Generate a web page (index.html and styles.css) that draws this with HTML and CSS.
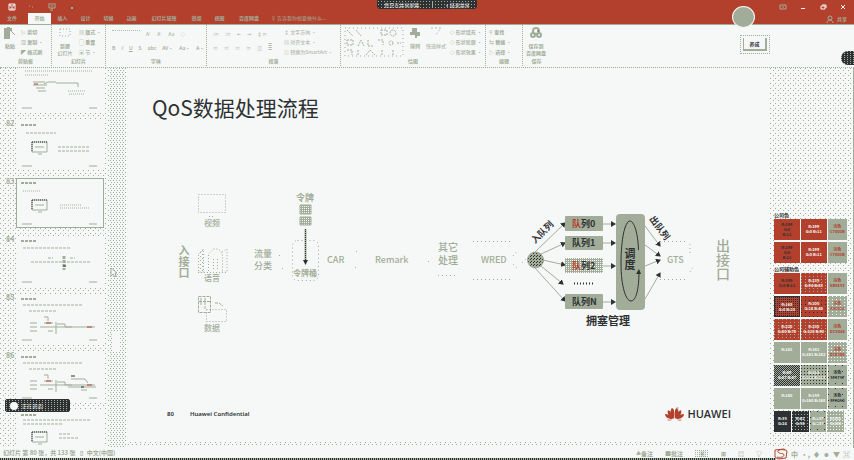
FILE: index.html
```
<!DOCTYPE html>
<html>
<head>
<meta charset="utf-8">
<title>QoS数据处理流程</title>
<link rel="stylesheet" href="styles.css">
</head>
<body>
<header class="titlebar">
  <div class="quick">
    <button aria-label="保存"><svg class="ico" viewBox="0 0 8 8"><path d="M1 1h6v6H1zM2 1v2h4V1M3 7V5h2v2" fill="none" stroke="#f6f8f7"/></svg></button>
    <button aria-label="撤消"><svg class="ico" viewBox="0 0 8 8"><path d="M1 3h1M4 4h1" stroke="#a2ad99"/></svg></button>
    <button aria-label="放映"><svg class="ico" viewBox="0 0 8 8"><path d="M0 1h8M1 2v3h6V2M4 5v3M3 3h2M2 7h1" fill="none" stroke="#a2ad99"/></svg></button>
    <button aria-label="自定义"><svg class="ico" viewBox="0 0 8 8"><path d="M3 4h2v2H3z" fill="#a2ad99"/></svg></button>
  </div>
  <div class="sharing"><span>您正在共享屏幕</span><i></i><button>◖ 结束共享</button></div>
  <div class="window">
    <button aria-label="功能区"><svg class="ico" viewBox="0 0 8 8"><path d="M1 2h6v4H1zM3 4h2" fill="none" stroke="#a2ad99"/></svg></button>
    <button aria-label="最小化"><svg class="ico" viewBox="0 0 8 8"><path d="M2 5.500h4" stroke="#f6f8f7"/></svg></button>
    <button aria-label="还原"><svg class="ico" viewBox="0 0 8 8"><path d="M2 3h4v3H2zM3 2h4v3" fill="none" stroke="#f6f8f7"/></svg></button>
    <button aria-label="关闭"><svg class="ico" viewBox="0 0 8 8"><path d="M2 2l4 4M6 2L2 6" stroke="#f6f8f7"/></svg></button>
  </div>
</header>
<nav class="tabs">
  <a href="#">文件</a><a href="#" class="on">开始</a><a href="#">插入</a><a href="#">设计</a><a href="#">切换</a><a href="#">动画</a><a href="#" class="wide">幻灯片放映</a><a href="#">审阅</a><a href="#">视图</a><a href="#" class="disk">百度网盘</a><a href="#" class="ask">♀ 告诉我你想要做什么...</a>
  <button class="share"><svg class="ico" viewBox="0 0 8 8"><circle cx="4" cy="3" r="2" fill="none" stroke="#a2ad99"/><path d="M1 8c0-4 6-4 6 0" fill="none" stroke="#a2ad99"/></svg>共享</button>
</nav>
<section class="ribbon">
  <div class="group g1">
    <div class="tools">
      <button class="big"><svg class="mid" viewBox="0 0 12 12"><path d="M0 1h3V0h3v1h2v3H6v8H0z" fill="#a2ad99"/><path d="M7 4l4 4" stroke="#a2ad99"/></svg><b>粘贴</b></button>
      <div class="rows"><button>✂ <b>剪切</b></button><button>▧ <b>复制</b> ·</button><button>◤ <b>格式刷</b></button></div>
    </div><h6>剪贴板</h6>
  </div>
  <div class="group g2">
    <div class="tools">
      <button class="big"><svg class="mid" viewBox="0 0 12 12"><path d="M1 2h10v7H1z" fill="none" stroke="#a2ad99" stroke-dasharray="1 2"/></svg><b>新建</b><br>幻灯片</button>
      <div class="rows"><button>▤ <b>版式</b> ·</button><button>▢ <b>重置</b></button><button>▣ 节 ·</button></div>
    </div><h6>幻灯片</h6>
  </div>
  <div class="group g3">
    <div class="tools stack">
      <div class="line faint"><span class="field"></span><span>A⁺</span><span>A⁻</span><span>Aa</span><span>◇</span></div>
      <div class="line"><span>B</span><span><em>I</em></span><span><u>U</u></span><span>S</span><span>abc</span><span>AV·</span><span>Aa·</span><span>A·</span></div>
    </div><h6>字体</h6>
  </div>
  <div class="group g4">
    <div class="tools">
      <div class="stack">
        <div class="line faint"><span>⁝≡</span><span>⁝≡</span><span>⇤</span><span>⇥</span><span>‡≡</span></div>
        <div class="line faint"><span>≡</span><span>≡</span><span>≡</span><span>≡</span><span>▥</span><span>≣</span></div>
      </div>
      <div class="rows faint"><button>↕ 文字方向 ·</button><button>▤ 对齐文本 ·</button><button>◫ 转换为SmartArt ·</button></div>
    </div><h6>段落</h6>
  </div>
  <div class="group g5">
    <div class="tools">
      <svg class="shapes" viewBox="0 0 60 30" fill="none" stroke="#a2ad99" stroke-dasharray="2 1"><path d="M1 1h58v28H1z" stroke-dasharray="1 3"/><path d="M3 3l6 6M12 3l5 6M37 3h6v5h-6zM3 13h6v5H3zM14 19l3-6 3 6M24 13v6h5M34 13h5v5M53 16h4M3 23h5v5M14 23v5M22 28l4-5 5 5M38 23v5M49 23v5"/><circle cx="49" cy="6" r="3"/><circle cx="47" cy="16" r="2"/></svg>
      <button class="big"><svg class="mid" viewBox="0 0 12 12"><path d="M3 1h5v4h3v4H8v2H6V8H1V5h2z" fill="#a2ad99"/></svg><b>排列</b></button>
      <button class="big faint"><svg class="mid" viewBox="0 0 12 12"><path d="M1 1h10L5 9" fill="none" stroke="#a2ad99" stroke-dasharray="2 2"/></svg>快速样式</button>
      <div class="rows"><button>◇ 形状填充 ·</button><button>◇ 形状轮廓 ·</button><button>◇ 形状效果 ·</button></div>
    </div><h6>绘图</h6>
  </div>
  <div class="group g6">
    <div class="tools"><div class="rows"><button>⚲ <b>查找</b></button><button>⇆ <b>替换</b> ·</button><button>▷ <b>选择</b> ·</button></div></div><h6>编辑</h6>
  </div>
  <div class="group g7">
    <div class="tools"><button class="big"><svg class="mid" viewBox="0 0 12 12"><circle cx="6" cy="4" r="3" fill="none" stroke="#a2ad99" stroke-width="2"/><circle cx="3" cy="8" r="2" fill="none" stroke="#a2ad99" stroke-width="2"/><circle cx="9" cy="8" r="2" fill="none" stroke="#a2ad99" stroke-width="2"/><path d="M7 4h2" stroke="#b3402d"/></svg><b>保存到</b><br><b>百度网盘</b></button></div><h6>保存</h6>
  </div>
</section>
<main class="work">
  <aside class="thumbs">
    <ol>
      <li><span></span><svg viewBox="0 0 88 50"><use href="#frame"/><path d="M17 20h12M17 23h14M20 26h9M22 29h8M28 22l4-2h8M40 21h22v4" class="k"/><path d="M18 22h4" stroke="#b3402d"/><path d="M9 9h67M9 13h24M52 29h17M53 32h15" class="d"/></svg></li>
      <li><span>82</span><svg viewBox="0 0 88 50"><use href="#frame"/><use href="#screen"/><path d="M10 13h30M42 27h31M42 31h31" class="k2"/></svg></li>
      <li class="sel"><span>83</span><svg viewBox="0 0 88 50"><use href="#frame"/><use href="#screen"/><path d="M7 13h17M44 27h22M44 30h30" class="d"/></svg></li>
      <li><span>84</span><svg viewBox="0 0 88 50"><use href="#frame"/><path d="M7 12h48M15 26h60M32 22h5M54 22h5" class="k2"/><path d="M48 20v14" class="k" stroke-width="3" stroke-dasharray="3 1"/><path d="M47 30h3" stroke="#2e3133"/></svg></li>
      <li><span>85</span><svg viewBox="0 0 88 50"><use href="#frame"/><use href="#flow"/></svg></li>
      <li><span>86</span><svg viewBox="0 0 88 50"><use href="#frame"/><use href="#flow"/><path d="M55 27h14l3 4M52 35h28M65 38h6" class="k"/><path d="M55 24h4M65 35h3" stroke="#2e3133"/></svg></li>
      <li><span></span><svg viewBox="0 0 88 50"><use href="#frame"/><use href="#screen"/><path d="M7 10h68M7 14h40M43 24h12M43 28h20" class="k2"/></svg></li>
    </ol>
    <div class="speaking"><i></i>正在讲话:</div>
  </aside>
  <div class="scroll"><i></i></div>
  <article class="slide">
    <h1>QoS数据处理流程</h1>
    <svg class="diagram" viewBox="128 185 642 150">
      <defs>
        <marker id="arrow" viewBox="0 0 5 6" refX="4" refY="3" markerWidth="5" markerHeight="6" markerUnits="userSpaceOnUse" orient="auto"><path d="M0 0l5 3-5 3z" fill="#2e3133"/></marker>
        <pattern id="speck" width="3" height="3" patternUnits="userSpaceOnUse"><path d="M0 0h3v3H0z" fill="#a2ad99"/><path d="M0 0h1v1H0zM2 1h1v1H2z" fill="#2e3133"/></pattern>
        <pattern id="mesh" width="2" height="2" patternUnits="userSpaceOnUse"><path d="M0 0h2v2H0z" fill="#a2ad99"/><path d="M0 0h1v1H0z" fill="#f6f8f7"/></pattern>
        <pattern id="light" width="4" height="4" patternUnits="userSpaceOnUse"><path d="M0 0h1v1H0zM2 2h1v1H2z" fill="#a2ad99"/></pattern>
      </defs>
      <g class="dots">
        <path d="M198.500 194.500h27v18h-27zM209 216.500h6"/>
        <path d="M198.500 254l5-5v23h-5zM208.500 271v-17l5-5h5l4 5v17M213.500 259v12M217.500 259v12M222 252l5-3v23h-6M198 272.500h28"/>
        <path d="M206.500 309.500h20v12h-20z"/>
        <rect x="292.500" y="240.500" width="26" height="40" rx="5" stroke-dasharray="1 3"/>
        <path d="M473 241.500h40M473 279.500h40M438 275.500h20" stroke-dasharray="1 3"/>
        <path d="M513 256l5-6M513 264l5 5M522 263l4-4M660 241.500h28M660 279.500h28M690 244v12M690 272l3-5" stroke-dasharray="1 3"/>
        <path d="M356 251.500h1M355 267.500h2M428 261.500h1M279 255.500h1M282 268.500h1"/>
      </g>
      <path d="M199 249h4v23h-4z" fill="url(#light)"/>
      <path d="M198.500 296.500h12v16h-12zM199 301.500h12M201 298v8M205 298v12M215 303h4l4 3" fill="none" stroke="#a2ad99" stroke-dasharray="3 1"/>
      <path d="M300 205h11v9h-11zM300 217h11v8h-11z" fill="url(#mesh)" stroke="#a2ad99"/>
      <path d="M305.500 229v32" stroke="#a2ad99" stroke-width="2"/><path d="M305.500 229v32" stroke="#2e3133" stroke-dasharray="1 1"/><path d="M303 260h5l-2.500 5z" fill="#2e3133"/>
      <g class="sage" font-weight="500">
        <g font-size="8"><text x="204" y="226">视频</text><text x="204" y="281">语音</text><text x="204" y="331">数据</text></g>
        <text class="down" x="184" y="245" font-size="11" font-weight="700">入接口</text>
        <text x="296" y="201" font-size="9" font-weight="700">令牌</text>
        <g font-size="9"><text x="254" y="257">流量</text><text x="254" y="269">分类</text><text x="327" y="263">CAR</text><text x="375" y="263">Remark</text><text x="481" y="263">WRED</text><text x="667" y="263">GTS</text></g>
        <text x="293" y="276" font-size="8" font-weight="700">令牌桶</text>
        <g font-size="10"><text x="438" y="251">其它</text><text x="438" y="264">处理</text></g>
        <text class="down" x="723" y="239" font-size="14">出接口</text>
      </g>
      <g stroke="#a2ad99">
        <path d="M535 252L565 223" marker-end="url(#arrow)"/><path d="M541 254L565 243" marker-end="url(#arrow)"/><path d="M543 260L565 265" marker-end="url(#arrow)"/><path d="M541 266L563 284" marker-end="url(#arrow)"/><path d="M535 268L565 301" marker-end="url(#arrow)"/>
        <path d="M603 224h12" marker-end="url(#arrow)"/><path d="M603 243h12" marker-end="url(#arrow)"/><path d="M603 266h12" marker-end="url(#arrow)"/><path d="M603 302h12" marker-end="url(#arrow)"/>
        <path d="M645 226L660 246" marker-end="url(#arrow)"/><path d="M645 245L660 256" marker-end="url(#arrow)"/><path d="M645 266L660 260" marker-end="url(#arrow)"/><path d="M645 299L660 273" marker-end="url(#arrow)"/>
      </g>
      <circle cx="535.500" cy="260" r="8" fill="url(#speck)" stroke="#a2ad99"/>
      <g fill="#a2ad99"><rect x="565" y="216" width="38" height="15" rx="1"/><rect x="565" y="236" width="38" height="14" rx="1"/><rect x="565" y="294" width="38" height="15" rx="1"/><rect x="616" y="214" width="29" height="96" rx="4"/></g>
      <rect x="565" y="258" width="38" height="15" rx="1" fill="url(#mesh)"/>
      <g font-size="9" font-weight="700" fill="#2e3133">
        <text x="572" y="227"><tspan fill="#b3402d">队</tspan>列0</text><text x="572" y="246">队列1</text><text x="572" y="269"><tspan fill="#b3402d">队</tspan>列2</text><text x="572" y="305">队列N</text>
        <text class="down" x="630" y="248" font-size="11">调度</text>
        <text x="586" y="325" font-size="11">拥塞管理</text>
        <text transform="translate(535 244) rotate(-45)">入队列</text>
        <text transform="translate(649 219) rotate(53)">出队列</text>
      </g>
      <path d="M574 283.500h21" stroke="#2e3133" stroke-width="2" stroke-dasharray="1 2"/>
      <path d="M638.500 250C638 233 634 221 630 221c-5 0-9 18-9 42s5 38 10 38 8-12 8-29" fill="none" stroke="#2e3133"/><path d="M636 274l3-5 2 5z" fill="#2e3133"/>
    </svg>
    <footer><span class="page">80</span><span>Huawei Confidential</span>
      <div class="brand"><svg viewBox="0 0 20 14"><g fill="#b3402d"><path d="M9.500 12C6 8 5 4 7 1c3-1 3 5 2.500 11zM10.500 12C14 8 15 4 13 1c-3-1-3 5-2.500 11zM9 12C5 11 2 7 3 3c3 0 5 5 6 9zM11 12c4-1 7-5 6-9-3 0-5 5-6 9zM8 12C4 13 0 10 0 7c3 0 6 2 8 5zM12 12c4 1 8-2 8-5-3 0-6 2-8 5zM8 13c-2 1-5 1-6 0zM12 13c2 1 5 1 6 0z"/></g><path d="M12 0h2v4" fill="#a2ad99"/></svg>HUAWEI</div>
    </footer>
  </article>
  <aside class="palette">
    <h2>公司色</h2>
    <div class="swatches">
      <p class="red ink">R:199<br>G:0<br>B:11</p><p class="red">R:199<br>G:0 B:11</p><p class="rust">淡色<br>C7000B</p>
      <p class="red ink">R:199<br>G:0<br>B:11</p><p class="red">R:199<br>G:0 B:11</p><p class="rust">淡色<br>C7000B</p>
    </div>
    <h2>公司辅助色</h2>
    <div class="swatches">
      <p class="red ink two">R:199<br>G:0 B:11</p><p class="red fleck">R:235<br>G:94 B:83</p><p class="rust">淡色<br>EB5E53</p>
      <p class="red dark">R:163<br>G:0 B:20</p><p class="red speck">R:200<br>G:16 B:46</p><p class="rust grain">淡色<br>A30014</p>
      <p class="red fleck">R:220<br>G:80 B:70</p><p class="red fleck">R:230<br>G:120 B:90</p><p class="rust">淡色<br>DC5046</p>
      <p>R:181</p><p>R:181<br>G:181 B:182</p><p class="rust pale">淡色<br>B5B5B6</p>
      <p class="check">R:89<br>G:87 B:87</p><p class="speck">R:113<br>G:112 B:113</p><p class="ink speckle">淡色<br>595757</p>
      <p>R:160</p><p>R:159<br>G:160 B:160</p><p class="ink speckle">淡色<br>9FA0A0</p>
    </div>
    <div class="swatches four"><p class="black">R:35<br>G:24</p><p class="black grain">R:62<br>G:58</p><p class="speckle">R:137<br>G:137</p><p class="pale">R:201<br>G:202</p></div>
  </aside>
  <div class="rim"></div>
</main>
<footer class="status">
  <span>幻灯片 第 80 张，共 133 张 &nbsp; ▯ &nbsp; 中文(中国)</span>
  <div class="views"><button>≙备注</button><button>■批注</button><button class="lit">▣</button><button>⊞</button><button>▤</button><button>▽</button></div>
  <div class="ime"><svg viewBox="0 0 14 12"><path d="M11 2C7 1 3 2 4 4s6 1 6 3-4 3-7 2M1 2v7l3 2 8-1 1-7-3-2z" fill="none" stroke="#b3402d"/></svg><span>中</span><span>·,</span><span>♦</span><span>☻</span><span>▼</span><span>⌘</span></div>
</footer>
<svg class="pointer" viewBox="0 0 8 10"><path d="M1 0v8l2-2 2 3 1-1-1-3h2z" fill="#f6f8f7" stroke="#a2ad99"/></svg>
<div class="avatar"></div><div class="name">养成</div><div class="knob"></div>
<svg width="0" height="0" class="defs"><defs>
  <g id="frame"><path d="M0 0h88v50H0z" fill="#f6f8f7"/><path d="M5 5h15" class="k2" stroke-width="2"/><path d="M6 46h10M73 46h8" class="k"/></g>
  <g id="screen"><path d="M16 22h15v10H16z" class="k"/><path d="M16 22h15M16 22v10" stroke="#2e3133" stroke-dasharray="1 1"/><path d="M19 27h9M22 34h4" class="k"/></g>
  <g id="flow"><path d="M7 11h60M13 17h27" class="k2"/><path d="M14 29h7M14 33h7M14 37h7M28 29h9M24 33h55M32 37h5M40 28v12M28 23h4v4M41 30h8v3h7" class="k"/><path d="M30 29h5M71 33h5" stroke="#b3402d"/></g>
</defs></svg>
</body>
</html>
```
FILE: styles.css
```
:root {
  --red: #b3402d;
  --sage: #a2ad99;
  --paper: #f6f8f7;
  --ink: #2e3133;
  --dot: conic-gradient(at 1px 1px, transparent 270deg, var(--sage) 0);
  --whitedot: conic-gradient(at 1px 1px, transparent 270deg, var(--paper) 0);
  --inkdot: conic-gradient(at 1px 1px, transparent 270deg, var(--ink) 0);
}
* { box-sizing: border-box; margin: 0; padding: 0; }
body {
  height: 100vh;
  display: flex;
  flex-direction: column;
  overflow: hidden;
  background: var(--paper);
  color: var(--sage);
  font: 5px/7px "Noto Sans CJK SC", sans-serif;
}
button { font: inherit; color: inherit; background: none; border: 0; white-space: nowrap; }
a { color: inherit; text-decoration: none; }
h1, h2, h6 { font-weight: 400; }
.ico { width: 8px; height: 8px; display: block; }
.mid { width: 12px; height: 12px; display: block; margin: 0 auto 3px; }
.faint { opacity: .8; }

.titlebar { height: 13px; flex: none; display: grid; grid-template-columns: 1fr auto 1fr; background: var(--red); }
.quick { display: flex; gap: 12px; padding: 1px 8px; }
.sharing {
  height: 9px; width: 100px; display: flex; align-items: center; justify-content: space-around;
  border-radius: 0 0 3px 3px; border: 1px solid var(--ink);
  background: var(--dot) 0 0 / 3px 3px, var(--ink);
  color: var(--paper);
}
.sharing i { width: 1px; height: 7px; background: var(--sage); }
.window { display: flex; gap: 12px; justify-content: flex-end; padding: 1px 7px; }

.tabs { height: 12px; flex: none; display: flex; background: var(--red); border-bottom: 1px solid var(--sage); line-height: 10px; font-weight: 700; }
.tabs a { width: 23px; text-align: center; white-space: nowrap; }
.tabs a:first-child { width: 28px; padding-right: 4px; }
.tabs a.on { background: var(--paper); }
.tabs a.wide { width: 42px; }
.tabs a.disk { width: 36px; }
.tabs a.ask { width: auto; font-weight: 400; padding-left: 4px; }
.share { margin-left: auto; display: flex; align-items: center; gap: 3px; padding-right: 7px; font-weight: 700; }

.ribbon { height: 43px; flex: none; display: flex; border-bottom: 1px dotted var(--sage); font-weight: 500; }
.group { display: flex; flex-direction: column; justify-content: space-between; border-right: 1px dotted var(--sage); padding: 2px 3px 2px; height: 41px; }
.group h6 { font-size: 5px; font-weight: 700; text-align: center; line-height: 7px; }
.g1 { width: 52px; } .g2 { width: 54px; } .g3 { width: 101px; } .g4 { width: 134px; }
.g5 { width: 145px; } .g6 { width: 37px; } .g7 { width: 27px; border-right: 0; }
.tools { display: flex; gap: 4px; }
.rows { display: flex; flex-direction: column; }
.rows button { height: 10px; text-align: left; line-height: 8px; }
.big { min-width: 14px; text-align: center; line-height: 7px; align-self: flex-start; }
.g2 .big, .g7 .big { min-width: 20px; }
.stack { display: flex; flex-direction: column; gap: 6px; padding-top: 3px; }
.line { display: flex; gap: 6px; padding: 0 3px; line-height: 8px; white-space: nowrap; }
.g4 .stack { width: 70px; }
.field { width: 28px; border-top: 1px dotted var(--sage); }
.shapes { width: 60px; height: 30px; flex: none; }

.work { flex: 1; min-height: 0; display: grid; grid-template-columns: 110px 18px minmax(0, 1fr) 82px 2px; }
.thumbs, .palette {
  position: relative; min-height: 0;
  background: var(--dot) 0 0 / 5px 5px, var(--dot) 3px 2px / 5px 5px, var(--paper);
}
.thumbs { overflow: hidden; }
.thumbs ol { list-style: none; margin-top: -6px; }
.thumbs li { display: grid; grid-template-columns: 10px 88px; margin: 0 0 8px 6px; }
.thumbs li span { font-size: 7px; line-height: 6px; font-weight: 700; }
.thumbs li svg { width: 88px; height: 50px; display: block; }
.thumbs .sel svg { outline: 1px solid var(--sage); outline-offset: -1px; }
.k { fill: none; stroke: #a2ad99; }
.k2 { fill: none; stroke: #a2ad99; stroke-dasharray: 3 1; }
.d { fill: none; stroke: #a2ad99; stroke-dasharray: 1 1; }
.defs { position: absolute; }
.speaking {
  position: absolute; left: 5px; bottom: 36px; width: 65px; height: 13px;
  display: flex; align-items: center; gap: 4px; padding-left: 4px;
  background: var(--dot) 0 0 / 3px 2px, var(--ink); border: 1px solid var(--ink); border-radius: 2px;
  color: var(--paper);
}
.speaking i { width: 8px; height: 8px; border-radius: 50%; background: var(--paper); }
.pointer { position: absolute; left: 110px; top: 268px; width: 8px; height: 10px; }
.scroll { background: var(--dot) 0 0 / 3px 4px, var(--dot) 1px 2px / 3px 4px, var(--paper); border-right: 2px solid var(--paper); padding-top: 264px; }
.scroll i { display: block; width: 8px; height: 20px; margin-left: 2px; background: var(--paper); }

.slide { display: flex; flex-direction: column; padding-top: 24px; min-width: 0; background: var(--paper); }
.slide h1 { color: var(--ink); font-size: 21px; line-height: 30px; padding-left: 24px; }
.diagram { display: block; width: 100%; margin-top: 63px; font-family: "Noto Sans CJK SC", sans-serif; }
.dots { fill: none; stroke: #a2ad99; stroke-dasharray: 1 2; }
.sage { fill: #a2ad99; }
.down { writing-mode: vertical-rl; }
.slide footer {
  flex: 1; display: flex; align-items: flex-start; padding: 72px 39px 0; color: var(--ink);
  font: 600 6px/14px "Noto Sans", sans-serif;
  background: var(--dot) 0 100% / 4px 4px repeat-x, var(--dot) 2px calc(100% - 2px) / 5px 4px repeat-x;
}
.page { width: 23px; }
.brand { margin-left: auto; display: flex; gap: 3px; font: 600 11px/14px "Open Sans", sans-serif; }
.brand svg { width: 19px; height: 14px; }

.palette { padding: 142px 5px 0 4px; }
.palette h2 { font-size: 5px; line-height: 9px; font-weight: 700; color: var(--ink); width: max-content; }
.palette h2 + .swatches + h2 { margin-top: 1px; }
.swatches { display: grid; grid-template-columns: 4fr 4fr 3fr; gap: 2px 1px; background: var(--paper); }
.swatches p {
  height: 21px; padding-top: 5px; text-align: center;
  background: var(--sage); color: var(--paper); font-size: 4px; line-height: 5px; white-space: nowrap; font-weight: 700;
}
.swatches .red { background: var(--red); }
.swatches .ink { color: var(--ink); }
.swatches .red.ink { padding-top: 3px; }
.swatches .red.two { padding-top: 5px; }
.swatches .rust { color: var(--red); }
.swatches .fleck { background: var(--dot) 0 0 / 4px 3px, var(--red); }
.swatches .speck { background: var(--inkdot) 0 0 / 3px 3px, var(--sage); }
.swatches .red.speck { background: var(--inkdot) 0 0 / 4px 4px, var(--red); }
.swatches .dark { background: var(--inkdot) 0 0 / 2px 2px, var(--red); border: 1px solid var(--ink); }
.swatches .check { background: var(--inkdot) 0 0 / 2px 2px, var(--inkdot) 1px 1px / 2px 2px, var(--sage); }
.swatches .pale { background: var(--whitedot) 0 0 / 3px 3px, var(--sage); }
.swatches .grain { background: var(--whitedot) 0 0 / 4px 3px, var(--sage); }
.swatches .speckle { background: var(--inkdot) 0 0 / 7px 6px, var(--sage); }
.swatches .black { background: var(--ink); }
.swatches .black.grain { background: var(--dot) 0 0 / 3px 3px, var(--ink); }
.swatches.four { grid-template-columns: repeat(4, 1fr); margin: 2px 3px 0 0; }
.rim { background: var(--paper); border-right: 1px solid var(--sage); }

.status {
  height: 12px; flex: none; display: flex; align-items: center; gap: 12px; padding-left: 3px; font-size: 6px; font-weight: 700;
  background: repeating-linear-gradient(90deg, var(--ink) 0 1px, var(--sage) 1px 2px) 0 100% / calc(100% - 78px) 2px no-repeat, var(--paper);
}
.status > span { line-height: 8px; padding-bottom: 2px; }
.views { margin-left: auto; display: flex; gap: 12px; padding-bottom: 2px; }
.views .lit { background: var(--dot) 0 0 / 2px 2px; padding: 0 4px; }
.ime { width: 80px; display: flex; align-items: center; justify-content: space-between; padding-right: 4px; font-size: 7px; }
.ime svg { width: 14px; height: 12px; }

.avatar { position: absolute; right: 99px; top: 6px; width: 23px; height: 22px; border-radius: 50%; background: var(--sage); border: 1px solid var(--paper); }
.name { position: absolute; right: 87px; top: 38px; width: 24px; height: 13px; background: var(--paper); border: solid var(--sage); border-width: 0 2px 2px 1px; outline: 1px dotted var(--sage); outline-offset: 2px; text-align: center; line-height: 11px; font-weight: 700; color: var(--ink); }
.knob { position: absolute; right: 0; top: 51px; width: 13px; height: 14px; border-radius: 7px 0 0 7px; background: var(--dot) 0 0 / 3px 2px, var(--ink); }
```
